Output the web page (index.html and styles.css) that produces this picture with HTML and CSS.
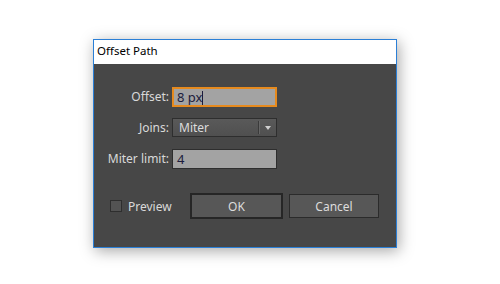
FILE: index.html
```html
<!DOCTYPE html>
<html lang="en">
<head>
    <meta charset="UTF-8">
    <title>Offset Path</title>
    <link rel="stylesheet" href="styles.css">
</head>
<body>

<div class="page">
    <div class="dialog">
        <div class="titlebar">Offset Path</div>
        <div class="content">
            <div class="form">
                <label class="label">Offset:</label>
                <div class="field focused">8 px<span class="caret"></span></div>

                <label class="label">Joins:</label>
                <div class="select">
                    <span class="select-text">Miter</span>
                    <span class="select-arrow"></span>
                </div>

                <label class="label">Miter limit:</label>
                <div class="field">4</div>
            </div>

            <div class="actions">
                <label class="check"><span class="box"></span>Preview</label>
                <button class="btn default">OK</button>
                <button class="btn">Cancel</button>
            </div>
        </div>
    </div>
</div>

</body>
</html>
```

FILE: styles.css
```css
body {
    margin: 0;
    padding: 0;
    background-color: #fff;
    font-family: "Noto Sans", "Open Sans", sans-serif;
}
.page {
    min-height: 284px;
    box-sizing: border-box;
    padding: 39px 0 30px 93px;
}
.dialog {
    width: 302px;
    height: 207px;
    border: 1px solid #2b7fd6;
    background-color: #474747;
    box-shadow: 2px 3px 14px rgba(0, 0, 0, 0.35);
}
.titlebar {
    height: 24px;
    line-height: 22px;
    padding-left: 3px;
    background-color: #fff;
    color: #000;
    font-size: 11.5px;
}
.content {
    padding-top: 23px;
}
.form {
    display: grid;
    grid-template-columns: 75px 105px;
    column-gap: 3px;
    row-gap: 11px;
}
.label {
    text-align: right;
    color: #d9d9d9;
    font-size: 12px;
    line-height: 20px;
}
.field {
    box-sizing: border-box;
    height: 20px;
    padding-left: 4px;
    background-color: #a3a3a3;
    border: 1px solid #2e2e2e;
    color: #1c1c3c;
    font-size: 13px;
    line-height: 18px;
}
.field.focused {
    border: 2px solid #e68a1e;
    padding-left: 3px;
    line-height: 16px;
}
.caret {
    display: inline-block;
    width: 1px;
    height: 14px;
    background-color: #1c1c3c;
    vertical-align: -3px;
}
.select {
    box-sizing: border-box;
    height: 19px;
    display: flex;
    align-items: center;
    border: 1px solid #2e2e2e;
    background: linear-gradient(#595959, #505050);
    color: #dcdcdc;
    font-size: 12px;
}
.select-text {
    flex: 1;
    padding-left: 6px;
    line-height: 17px;
}
.select-arrow {
    width: 17px;
    height: 13px;
    border-left: 1px solid #3a3a3a;
    box-shadow: inset 1px 0 0 #666;
    position: relative;
}
.select-arrow::after {
    content: "";
    position: absolute;
    left: 6px;
    top: 5px;
    border-left: 3px solid transparent;
    border-right: 3px solid transparent;
    border-top: 4px solid #d0d0d0;
}
.actions {
    display: flex;
    align-items: center;
    margin-top: 24px;
    padding-left: 16px;
}
.check {
    display: flex;
    align-items: center;
    width: 80px;
    color: #d9d9d9;
    font-size: 12px;
}
.box {
    width: 10px;
    height: 10px;
    margin-right: 6px;
    border: 1px solid #2e2e2e;
    background-color: #535353;
}
.btn {
    box-sizing: border-box;
    height: 24px;
    width: 90px;
    margin-right: 6px;
    background-color: #575757;
    border: 1px solid #2b2b2b;
    color: #dcdcdc;
    font-family: inherit;
    font-size: 12px;
    padding: 0;
}
.btn.default {
    width: 93px;
    height: 26px;
    border: 2px solid #262626;
}
```
